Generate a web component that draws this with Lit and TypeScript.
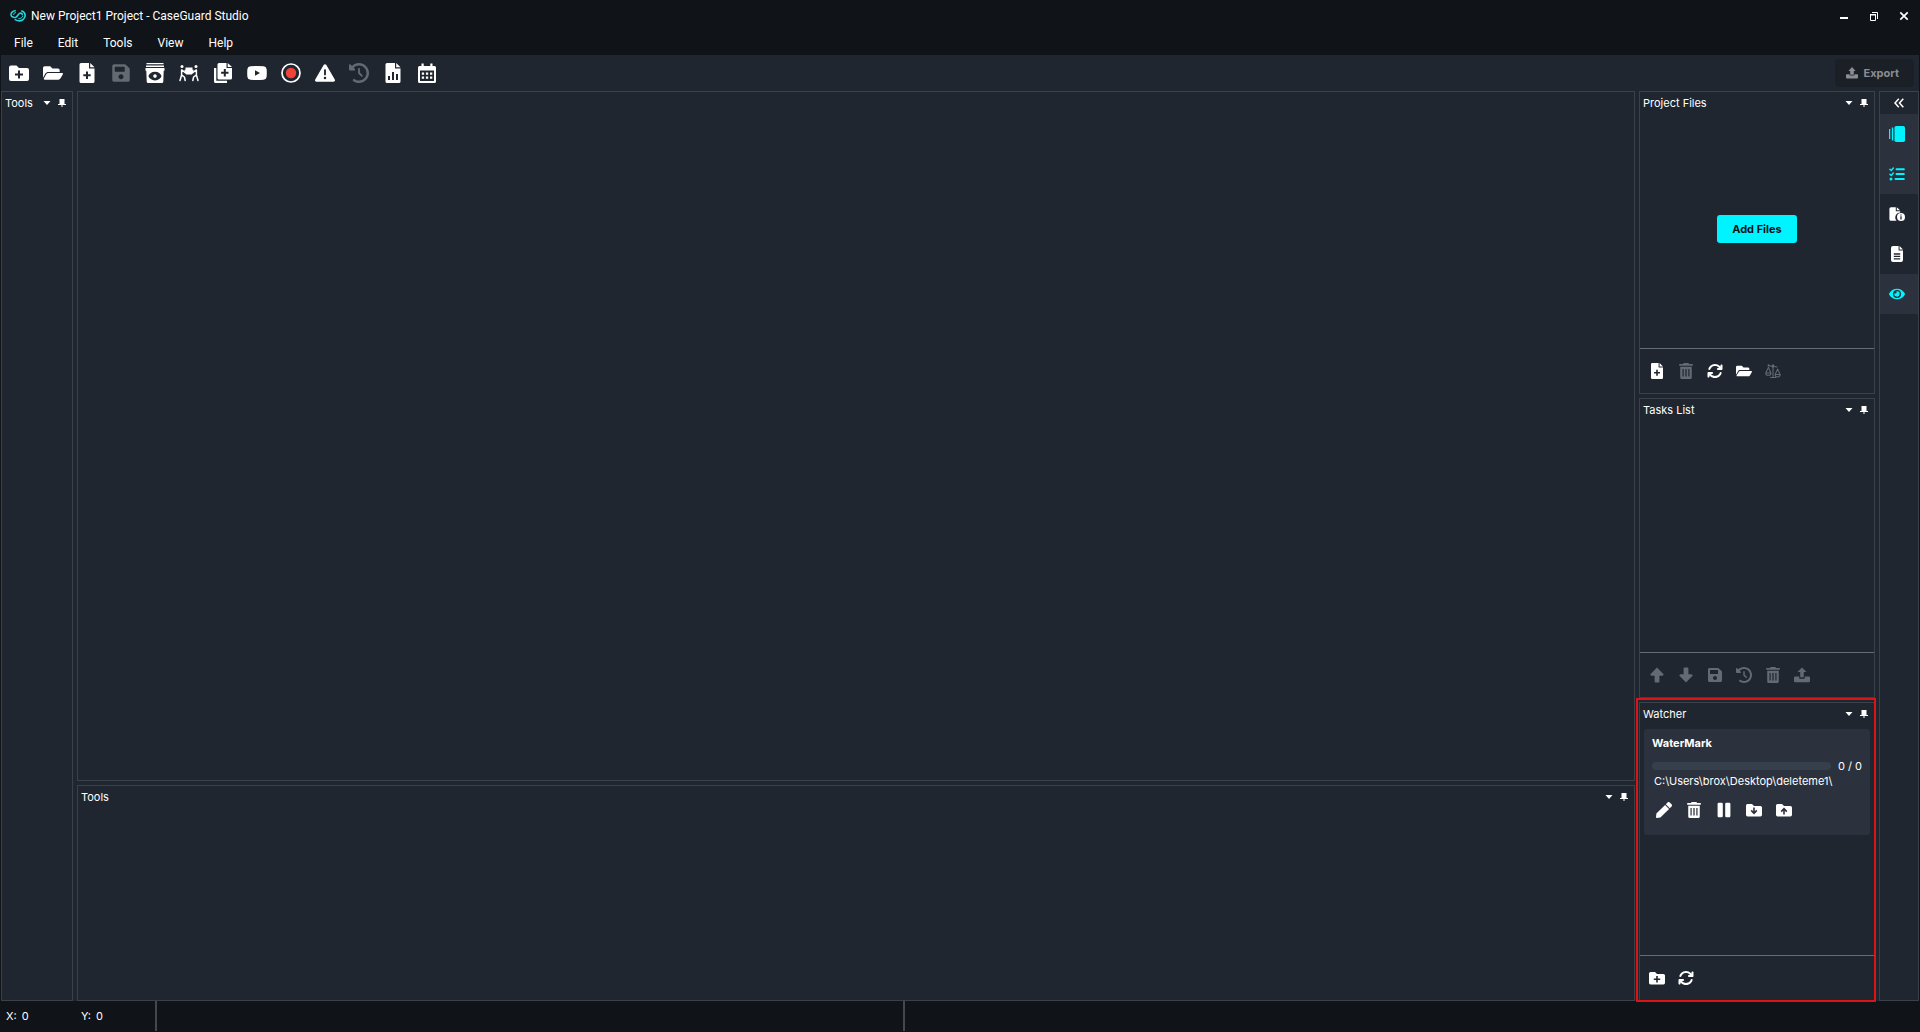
import { LitElement, html, css, svg, nothing, type TemplateResult } from "lit";
import { customElement, property } from "lit/decorators.js";
import { classMap } from "lit/directives/class-map.js";

const glyphs: Record<string, { box: string; art: TemplateResult }> = {
  logo: {
    box: "0 0 16 12",
    art: svg`<g fill="none" stroke="#1fd6dc" stroke-linecap="round">
      <path stroke-width="1.600" d="M5.200 .8C2.700 1 .8 2.700 1 4.800 1.200 7 3.800 7.900 5.800 7.200 7.600 6.500 7.800 4.600 9.200 3.600 10.600 2.700 12.200 3.300 12.300 4.800"/>
      <path stroke-width="1.600" d="M11.800 1C14 1.700 15.300 3.700 15.100 6 14.700 9.400 11.400 11.100 8.600 10.800 7.200 10.600 6.100 10.200 5.200 9.600"/>
      <path stroke-width="1" d="M5.600 2.600C4.400 2.700 3.500 3.500 3.700 4.600M12.600 6.400C12 8 10.400 8.700 8.800 8.500"/></g>`,
  },
  folderPlus: {
    box: "0 0 20 20",
    art: svg`<path fill-rule="evenodd" d="M2 2.500h5.500l2.500 2.500h8a2 2 0 0 1 2 2v9a2 2 0 0 1-2 2H2a2 2 0 0 1-2-2V4.500a2 2 0 0 1 2-2zM9 7.500V10.500H6v2h3v3h2v-3h3v-2h-3v-3z"/>`,
  },
  folderDown: {
    box: "0 0 20 20",
    art: svg`<path fill-rule="evenodd" d="M2 2.500h5.500l2.500 2.500h8a2 2 0 0 1 2 2v9a2 2 0 0 1-2 2H2a2 2 0 0 1-2-2V4.500a2 2 0 0 1 2-2zM9 7v4.500L7.200 9.800 5.800 11.200 10 15.500 14.200 11.200 12.800 9.800 11 11.500V7z"/>`,
  },
  folderUp: {
    box: "0 0 20 20",
    art: svg`<path fill-rule="evenodd" d="M2 2.500h5.500l2.500 2.500h8a2 2 0 0 1 2 2v9a2 2 0 0 1-2 2H2a2 2 0 0 1-2-2V4.500a2 2 0 0 1 2-2zM9 15.500V11L7.200 12.700 5.800 11.300 10 7 14.200 11.300 12.800 12.700 11 11v4.500z"/>`,
  },
  folderOpen: {
    box: "0 0 576 512",
    art: svg`<path d="M572.694 292.093L500.270 416.248A63.997 63.997 0 0 1 444.989 448H45.025c-18.523 0-30.064-20.093-20.731-36.093l72.424-124.155A64 64 0 0 1 152 256h399.964c18.523 0 30.064 20.093 20.730 36.093zM152 224h328v-48c0-26.510-21.490-48-48-48H272l-64-64H48C21.490 64 0 85.490 0 112v278.046l69.077-118.418C86.214 242.250 117.989 224 152 224z"/>`,
  },
  filePlus: {
    box: "0 0 20 20",
    art: svg`<path fill-rule="evenodd" d="M4 0h8v5.500h5.500V18.500a1.500 1.500 0 0 1-1.500 1.500H4a1.500 1.500 0 0 1-1.500-1.500V1.500A1.500 1.500 0 0 1 4 0zM9 8.500v2.700H6.300v2H9V16h2v-2.800h2.700v-2H11V8.500z"/><path d="M13.200 0l4.300 4.300h-4.300z"/>`,
  },
  fileReport: {
    box: "0 0 20 20",
    art: svg`<path fill-rule="evenodd" d="M4 0h8v5.500h5.500V18.500a1.500 1.500 0 0 1-1.500 1.500H4a1.500 1.500 0 0 1-1.500-1.500V1.500A1.500 1.500 0 0 1 4 0zM5 13v4h2v-4zM9 9v8h2V9zM13 11v6h2v-6z"/><path d="M13.200 0l4.300 4.300h-4.300z"/>`,
  },
  fileText: {
    box: "0 0 20 20",
    art: svg`<path fill-rule="evenodd" d="M5 0h7v5.500h5.500V17.500a2.500 2.500 0 0 1-2.500 2.500H5a2.500 2.500 0 0 1-2.500-2.500v-15A2.500 2.500 0 0 1 5 0zM6 9.200v1.600h8V9.200zM6 12.300v1.600h8v-1.600zM6 15.400V17h8v-1.600z"/><path d="M13.200 0l4.300 4.300h-4.300z"/>`,
  },
  fileInfo: {
    box: "0 0 20 20",
    art: svg`<path d="M2.500 1.500h6v5H14v1.600A6.200 6.200 0 0 0 9.500 18.500H2.500A2 2 0 0 1 .5 16.500v-13a2 2 0 0 1 2-2z"/><path d="M9.800 1.500L13.800 5.400h-4z"/><path fill-rule="evenodd" d="M15 8.800a5 5 0 1 1 0 10 5 5 0 0 1 0-10zM14.200 10.500v1.500h1.600v-1.500zM14.200 12.800v4h1.600v-4z"/>`,
  },
  save: {
    box: "0 0 448 512",
    art: svg`<path d="M433.941 129.941l-83.882-83.882A48 48 0 0 0 316.118 32H48C21.490 32 0 53.490 0 80v352c0 26.510 21.490 48 48 48h352c26.510 0 48-21.490 48-48V163.882a48 48 0 0 0-14.059-33.941zM224 416c-35.346 0-64-28.654-64-64 0-35.346 28.654-64 64-64s64 28.654 64 64c0 35.346-28.654 64-64 64zm96-304.520V212c0 6.627-5.373 12-12 12H76c-6.627 0-12-5.373-12-12V108c0-6.627 5.373-12 12-12h228.520c3.183 0 6.235 1.264 8.485 3.515l3.480 3.480A11.996 11.996 0 0 1 320 111.480z"/>`,
  },
  watch: {
    box: "0 0 20 20",
    art: svg`<path d="M1.500 0h17v1.300h-17zM1 2.600h18v1.300H1z"/><path fill-rule="evenodd" d="M.5 5h19v2.800h-.8l-.4 10.700a1.500 1.500 0 0 1-1.500 1.500H3.200a1.500 1.500 0 0 1-1.500-1.500L1.300 7.800H.5zM10 8.800c-3.400 0-5.800 2-6.600 4.300.8 2.300 3.200 4.300 6.600 4.300s5.800-2 6.600-4.300C15.800 10.800 13.400 8.800 10 8.800z"/><circle cx="10" cy="13.100" r="1.800"/>`,
  },
  meeting: {
    box: "0 0 20 20",
    art: svg`<circle cx="3" cy="3.600" r="1.500"/><circle cx="17" cy="3.600" r="1.500"/><g fill="none" stroke="currentColor" stroke-width="1.500" stroke-linecap="round" stroke-linejoin="round"><path d="M2.600 7v5L1 17.500M2.800 12.200l2.600 1.800.8 3.500M3 7l3.500 2.800M17.400 7v5l1.600 5.500M17.200 12.200L14.600 14l-.8 3.500M17 7l-3.500 2.800"/></g><path d="M6.500 4.500h7v2.300h1V8L13 11.500H7L5.500 8V6.800h1z"/>`,
  },
  copies: {
    box: "0 0 20 20",
    art: svg`<path d="M1 5h2.300v12.700H14V20H2.500A1.500 1.500 0 0 1 1 18.500z"/><path fill-rule="evenodd" d="M6 0h7.500v5H19V15a1.500 1.500 0 0 1-1.500 1.500H6A1.500 1.500 0 0 1 4.500 15V1.500A1.500 1.500 0 0 1 6 0zM10.800 6v2.700H8.100v2h2.700v2.800h2v-2.800h2.700v-2h-2.700V6z"/><path d="M14.700 0L19 3.900h-4.300z"/>`,
  },
  video: {
    box: "0 0 20 20",
    art: svg`<path fill-rule="evenodd" d="M3.500 3.200Q10 2.600 16.500 3.200 19.200 3.400 19.600 6 20 10 19.600 14 19.200 16.600 16.500 16.800 10 17.400 3.500 16.800 .8 16.600 .4 14 0 10 .4 6 .8 3.400 3.500 3.200zM8 7.200v5.600l5-2.800z"/>`,
  },
  record: {
    box: "0 0 20 20",
    art: svg`<circle cx="10" cy="10" r="9" fill="none" stroke="currentColor" stroke-width="1.700"/><circle cx="10" cy="10" r="5.200" fill="#f04438"/>`,
  },
  warning: {
    box: "0 0 512 512",
    art: svg`<path d="M256 32c14.200 0 27.300 7.500 34.500 19.800l216 368c7.300 12.400 7.300 27.700 .2 40.100S486.300 480 472 480H40c-14.300 0-27.600-7.700-34.700-20.100s-7-27.800 .2-40.100l216-368C228.700 39.500 241.800 32 256 32zm0 128c-13.300 0-24 10.700-24 24V296c0 13.300 10.700 24 24 24s24-10.700 24-24V184c0-13.300-10.700-24-24-24zm32 224a32 32 0 1 0 -64 0 32 32 0 1 0 64 0z"/>`,
  },
  history: {
    box: "0 0 512 512",
    art: svg`<path d="M75 75L41 41C25.900 25.900 0 36.600 0 57.900V168c0 13.300 10.700 24 24 24H134.100c21.400 0 32.100-25.900 17-41l-30.800-30.800C155 85.500 203 64 256 64c106 0 192 86 192 192s-86 192-192 192c-40.800 0-78.600-12.700-109.700-34.400c-14.500-10.100-34.400-6.600-44.600 7.900s-6.600 34.400 7.900 44.600C151.200 495 201.700 512 256 512c141.400 0 256-114.600 256-256S397.400 0 256 0C185.300 0 121.300 28.700 75 75zm181 53c-13.300 0-24 10.700-24 24V256c0 6.400 2.500 12.500 7 17l72 72c9.400 9.400 24.600 9.400 33.900 0s9.400-24.600 0-33.900l-65-65V152c0-13.300-10.700-24-24-24z"/>`,
  },
  calendar: {
    box: "0 0 20 20",
    art: svg`<path fill-rule="evenodd" d="M4.500 .5h2.200V3h6.600V.5h2.200V3H17.500A1.500 1.500 0 0 1 19 4.500v14a1.500 1.500 0 0 1-1.500 1.500h-15A1.500 1.500 0 0 1 1 18.500v-14A1.500 1.500 0 0 1 2.500 3h2zM3 7.500V18h14V7.500z"/><path d="M4.800 9.500h2.300v2.200H4.800zM8.900 9.500h2.300v2.200H8.900zM13 9.500h2.300v2.200H13zM4.800 13.500h2.300v2.200H4.800zM8.900 13.500h2.300v2.200H8.900zM13 13.500h2.300v2.200H13z"/>`,
  },
  upload: {
    box: "0 0 20 20",
    art: svg`<path d="M10 .5l5.600 5.800h-3.400v6.400H7.800V6.300H4.400z"/><path d="M1.500 12h5v1.800a1 1 0 0 0 1 1h5a1 1 0 0 0 1-1V12h5A1.500 1.500 0 0 1 20 13.500V17.500a1.500 1.500 0 0 1-1.500 1.500h-17A1.500 1.500 0 0 1 0 17.500V13.500A1.500 1.500 0 0 1 1.500 12z"/>`,
  },
  exportUp: {
    box: "0 0 20 20",
    art: svg`<path d="M10 0l6 6.500h-3V12a1 1 0 0 1-1 1H8a1 1 0 0 1-1-1V6.500H4z"/><path d="M1.500 12h4.200a2.300 2.300 0 0 0 2.300 2.300h4a2.300 2.300 0 0 0 2.300-2.300h4.200A1.500 1.500 0 0 1 20 13.500v4a1.500 1.500 0 0 1-1.500 1.500h-17A1.500 1.500 0 0 1 0 17.500v-4A1.500 1.500 0 0 1 1.500 12z"/>`,
  },
  trash: {
    box: "0 0 20 20",
    art: svg`<path d="M7 0h6l.8 1.300H18.500v2h-17v-2H6.200z"/><path fill-rule="evenodd" d="M2.800 4.600h14.400V18a2 2 0 0 1-2 2H4.800a2 2 0 0 1-2-2zM5.600 7.500V17h1.500V7.500zM9.200 7.500V17h1.600V7.500zM12.900 7.500V17h1.500V7.500z"/>`,
  },
  sync: {
    box: "0 0 512 512",
    art: svg`<path d="M105.100 202.600c7.700-21.800 20.200-42.300 37.800-59.800c62.500-62.500 163.800-62.500 226.300 0L386.300 160H352c-17.700 0-32 14.300-32 32s14.300 32 32 32H463.900c17.700 0 32-14.300 32-32V80c0-17.700-14.300-32-32-32s-32 14.300-32 32v35.200L414.400 97.600c-87.500-87.500-229.300-87.500-316.800 0C73.200 122 55.600 150.700 44.800 181.400c-5.900 16.700 2.900 34.900 19.500 40.800s34.900-2.900 40.800-19.500zM39 289.300c-5 1.500-9.800 4.200-13.700 8.200c-4 4-6.700 8.800-8.100 14c-.3 1.200-.6 2.500-.8 3.800c-.3 1.700-.4 3.400-.4 5.100V432c0 17.700 14.300 32 32 32s32-14.300 32-32V396.900l17.600 17.500c87.500 87.400 229.300 87.400 316.700 0c24.400-24.400 42.100-53.100 52.900-83.700c5.900-16.700-2.900-34.900-19.500-40.800s-34.900 2.900-40.800 19.500c-7.700 21.800-20.200 42.300-37.800 59.800c-62.500 62.500-163.800 62.500-226.300 0l-.1-.1L125.600 352H160c17.700 0 32-14.300 32-32s-14.300-32-32-32H48.400c-1.600 0-3.200 .1-4.800 .3s-3.100 .5-4.600 1z"/>`,
  },
  scales: {
    box: "0 0 20 20",
    art: svg`<g fill="none" stroke="currentColor" stroke-width="1.300" stroke-linejoin="round"><path d="M4.500 3.500L15.500 5M10 1.500V18M6.500 18H14M4.200 5.500L1 12.500h6.400zM15.800 7.500l-3.200 7H19z"/><path d="M1 12.800a3.200 2.600 0 0 0 6.400 0M12.600 14.800a3.200 2.600 0 0 0 6.400 0"/></g><circle cx="4.500" cy="3" r="1.300"/><circle cx="10" cy="4" r="1.800"/>`,
  },
  arrowUp: { box: "0 0 20 20", art: svg`<path d="M10 .5L18.500 9.500 17 11h-4V18.500a1 1 0 0 1-1 1H8a1 1 0 0 1-1-1V11H3L1.500 9.500z"/>` },
  arrowDown: { box: "0 0 20 20", art: svg`<path d="M10 19.500L18.500 10.500 17 9h-4V1.500a1 1 0 0 0-1-1H8a1 1 0 0 0-1 1V9H3L1.500 10.500z"/>` },
  pen: {
    box: "0 0 512 512",
    art: svg`<path d="M290.740 93.240l128.020 128.020-277.990 277.990-114.140 12.600C11.350 513.540-1.560 500.620.140 485.340l12.700-114.220 277.900-277.880zm207.200-19.060l-60.110-60.110c-18.750-18.750-49.160-18.750-67.910 0l-56.550 56.550 128.020 128.020 56.550-56.550c18.750-18.760 18.750-49.160 0-67.910z"/>`,
  },
  pause: { box: "0 0 20 20", art: svg`<rect x="2" y="1" width="6.500" height="18" rx="1.500"/><rect x="11.500" y="1" width="6.500" height="18" rx="1.500"/>` },
  slides: { box: "0 0 16 16", art: svg`<rect x="5.500" y="0" width="10.500" height="16" rx="1.800"/><rect x="2.800" y="1.500" width="1.400" height="13"/><rect x="0" y="3" width="1.300" height="10"/>` },
  checklist: {
    box: "0 0 16 16",
    art: svg`<g fill="none" stroke="currentColor" stroke-linecap="round" stroke-linejoin="round"><path stroke-width="1.400" d="M.9 3.300l1.300 1.200L4.300 2M.9 8.300l1.300 1.200L4.300 7"/><path stroke-width="1.900" d="M7.500 3.200h7.400M7.500 8h7.400M6.500 13h8.400"/></g><circle cx="2" cy="13" r="1.500"/>`,
  },
  eye: {
    box: "0 0 576 512",
    art: svg`<path d="M572.520 241.400C518.290 135.590 410.930 64 288 64S57.680 135.640 3.480 241.410a32.350 32.350 0 0 0 0 29.190C57.710 376.410 165.070 448 288 448s230.320-71.640 284.520-177.410a32.350 32.350 0 0 0 0-29.190zM288 400a144 144 0 1 1 144-144 143.930 143.930 0 0 1-144 144zm0-240a95.310 95.310 0 0 0-25.310 3.790 47.850 47.850 0 0 1-66.900 66.900A95.780 95.780 0 1 0 288 160z"/>`,
  },
  collapse: { box: "0 0 10 10", art: svg`<path fill="none" stroke="currentColor" stroke-width="1.500" d="M4.800 .8L1 5l3.800 4.200M9.300 .8L5.500 5l3.800 4.200"/>` },
  caret: { box: "0 0 8 8", art: svg`<path d="M.5 2h7L4 6z"/>` },
  pin: { box: "0 0 8 10", art: svg`<path d="M1.500 1h5v5H8v1H0V6h1.500zM3.500 7h1v2h-1z"/>` },
  minimize: { box: "0 0 10 10", art: svg`<path d="M1 6h8v2H1z"/>` },
  restore: { box: "0 0 10 10", art: svg`<path fill="none" stroke="currentColor" d="M1.500 3.500h5v6h-5zM3 1.500h5.500V8"/><path d="M1 3h6v1.500H1z"/>` },
  close: { box: "0 0 10 10", art: svg`<path fill="none" stroke="currentColor" stroke-width="1.700" d="M1.300 1.300l7.400 7.400M8.700 1.300L1.300 8.700"/>` },
};

@customElement("cg-icon")
class CgIcon extends LitElement {
  static styles = css`
    :host { display: inline-flex; width: var(--icon, 16px); height: var(--icon, 16px); }
    .glyph { width: 100%; height: 100%; fill: currentColor; display: block; }
  `;
  @property() name = "";
  render() {
    const g = glyphs[this.name];
    return g
      ? html`<svg class="glyph" viewBox=${g.box} aria-hidden="true">${g.art}</svg>`
      : nothing;
  }
}

interface Action {
  icon: string;
  label: string;
  off?: boolean;
}

const bare = css`
  * { box-sizing: border-box; }
  button {
    font: inherit;
    color: inherit;
    background: none;
    border: 0;
    margin: 0;
    padding: 0;
    display: flex;
    align-items: center;
    justify-content: center;
  }
  button:disabled { color: var(--muted); }
`;

@customElement("cg-actions")
class CgActions extends LitElement {
  static styles = [
    bare,
    css`
      :host { display: flex; align-items: center; }
      .action { width: var(--pitch, 29px); height: 28px; }
    `,
  ];
  @property({ attribute: false }) items: Action[] = [];
  render() {
    return this.items.map(
      (a) => html`<button class="action" aria-label=${a.label} ?disabled=${!!a.off}>
        <cg-icon name=${a.icon}></cg-icon>
      </button>`,
    );
  }
}

@customElement("cg-panel")
class CgPanel extends LitElement {
  static styles = [
    bare,
    css`
      :host {
        display: flex;
        flex-direction: column;
        position: relative;
        min-width: 0;
        min-height: 0;
        border: 1px solid var(--line);
      }
      .head { display: flex; align-items: center; height: 22px; padding: 0 3px; }
      .title { flex: 1; margin: 0; font: inherit; }
      .tool { width: 15px; height: 16px; --icon: 8px; }
      .tool.pin { --icon: 10px; }
      .body { flex: 1; min-height: 0; display: flex; flex-direction: column; }
      .foot { height: 45px; display: flex; align-items: center; padding: 0 2px; border-top: 1px solid #676c73; }
    `,
  ];
  @property() heading = "";
  @property({ attribute: false }) actions: Action[] = [];
  render() {
    return html`
      ${this.heading
        ? html`<header class="head">
            <h2 class="title">${this.heading}</h2>
            <button class="tool" aria-label="Panel menu"><cg-icon name="caret"></cg-icon></button>
            <button class="tool pin" aria-label="Pin panel"><cg-icon name="pin"></cg-icon></button>
          </header>`
        : nothing}
      <div class="body"><slot></slot></div>
      ${this.actions.length
        ? html`<footer class="foot"><cg-actions .items=${this.actions}></cg-actions></footer>`
        : nothing}
    `;
  }
}

@customElement("app-root")
class AppRoot extends LitElement {
  static styles = [
    bare,
    css`
      :host {
        --base: #20262f;
        --dark: #101317;
        --line: #3b4149;
        --muted: #646a72;
        --raised: #2b323d;
        --accent: #00f4ff;
        display: block;
        background: var(--dark);
        color: #fff;
        font: 11px/16px Inter, "Liberation Sans", sans-serif;
      }
      .window { display: flex; flex-direction: column; min-height: 100vh; padding: 0 1px; }
      .titlebar, .menu { font: 12px/16px Roboto, "Open Sans", sans-serif; }
      .titlebar { display: flex; align-items: center; height: 31px; padding-left: 9px; gap: 5px; }
      .logo { --icon: 16px; }
      .name { flex: 1; margin: 0; font: inherit; }
      .controls { display: flex; }
      .control { width: 30px; height: 24px; --icon: 10px; }
      .menu { display: flex; height: 24px; padding-left: 1px; }
      .entry { padding: 0 13px 0 12px; height: 24px; }
      .main { flex: 1; display: flex; flex-direction: column; background: var(--base); }
      .toolbar { display: flex; justify-content: space-between; align-items: center; height: 36px; padding: 0 5px 0 1px; --icon: 20px; --pitch: 34px; }
      .export { height: 28px; gap: 6px; padding: 0 15px 0 11px; border-radius: 4px; background: #1b2027; font-weight: 700; --icon: 12px; }
      .export:disabled { color: #8a8d91; }
      .workspace { flex: 1; display: grid; grid-template-columns: 72px minmax(0, 1fr) 236px 40px; gap: 4px; }
      .center { display: grid; grid-template-rows: 1fr 216px; gap: 4px; }
      .right { display: grid; grid-template-rows: 303fr 300fr 299fr; gap: 4px; }
      .empty { flex: 1; display: flex; align-items: center; justify-content: center; padding-bottom: 5px; }
      .add { width: 80px; height: 28px; padding-top: 1px; border-radius: 3px; background: var(--accent); color: #0b1218; font-weight: 700; }
      .frame { position: absolute; inset: -5px -2px -2px -4px; border: 2px solid #dc1418; pointer-events: none; z-index: 1; }
      .card { display: flex; flex-direction: column; margin: 4px; padding: 6px 8px 11px; border-radius: 3px; background: var(--raised); }
      .job { margin: 0; font: inherit; font-weight: 700; }
      .status { display: flex; align-items: center; gap: 7px; margin-top: 7px; }
      .bar { flex: 1; min-width: 0; height: 8px; appearance: none; border: 0; border-radius: 4px; overflow: hidden; background: #35404c; }
      .bar::-webkit-progress-bar { background: #35404c; }
      .bar::-webkit-progress-value { background: var(--accent); }
      .path { margin: 0; padding-left: 2px; line-height: 14px; }
      .jobtools { margin: 8px 0 0 -3px; --pitch: 30px; }
      .rail { display: flex; flex-direction: column; border: 1px solid var(--line); }
      .collapse { height: 22px; --icon: 10px; }
      .tab { height: 40px; padding-right: 4px; }
      .tab.on { background: var(--raised); color: var(--accent); }
      .statusbar { display: grid; grid-template-columns: 156px 748fr 1014fr; height: 31px; padding-bottom: 1px; }
      .cell { display: flex; align-items: center; border-right: 2px solid #44474b; }
      .cell:last-child { border-right: 0; }
      .coord { display: flex; gap: 5px; width: 75px; padding-left: 5px; }
    `,
  ];

  private menu = ["File", "Edit", "Tools", "View", "Help"];

  private toolbar: Action[] = [
    { icon: "folderPlus", label: "New project" },
    { icon: "folderOpen", label: "Open project" },
    { icon: "filePlus", label: "Add file" },
    { icon: "save", label: "Save", off: true },
    { icon: "watch", label: "Watch folder" },
    { icon: "meeting", label: "Interview" },
    { icon: "copies", label: "Batch add" },
    { icon: "video", label: "Video" },
    { icon: "record", label: "Record" },
    { icon: "warning", label: "Warnings" },
    { icon: "history", label: "History", off: true },
    { icon: "fileReport", label: "Report" },
    { icon: "calendar", label: "Schedule" },
  ];

  private fileActions: Action[] = [
    { icon: "filePlus", label: "Add file" },
    { icon: "trash", label: "Delete", off: true },
    { icon: "sync", label: "Refresh" },
    { icon: "folderOpen", label: "Open folder" },
    { icon: "scales", label: "Compare", off: true },
  ];

  private taskActions: Action[] = [
    { icon: "arrowUp", label: "Move up", off: true },
    { icon: "arrowDown", label: "Move down", off: true },
    { icon: "save", label: "Save", off: true },
    { icon: "history", label: "History", off: true },
    { icon: "trash", label: "Delete", off: true },
    { icon: "upload", label: "Export", off: true },
  ];

  private watcherActions: Action[] = [
    { icon: "folderPlus", label: "Add watcher" },
    { icon: "sync", label: "Refresh" },
  ];

  private jobActions: Action[] = [
    { icon: "pen", label: "Edit" },
    { icon: "trash", label: "Delete" },
    { icon: "pause", label: "Pause" },
    { icon: "folderDown", label: "Input folder" },
    { icon: "folderUp", label: "Output folder" },
  ];

  private tabs = [
    { icon: "slides", label: "Project files", on: true },
    { icon: "checklist", label: "Tasks list", on: true },
    { icon: "fileInfo", label: "File info", on: false },
    { icon: "fileText", label: "Transcript", on: false },
    { icon: "eye", label: "Watcher", on: true },
  ];

  render() {
    return html`
      <div class="window">
        <header class="titlebar">
          <cg-icon class="logo" name="logo"></cg-icon>
          <h1 class="name">New Project1 Project - CaseGuard Studio</h1>
          <div class="controls">
            <button class="control" aria-label="Minimize"><cg-icon name="minimize"></cg-icon></button>
            <button class="control" aria-label="Restore"><cg-icon name="restore"></cg-icon></button>
            <button class="control" aria-label="Close"><cg-icon name="close"></cg-icon></button>
          </div>
        </header>
        <nav class="menu">${this.menu.map((m) => html`<button class="entry">${m}</button>`)}</nav>
        <div class="main">
          <div class="toolbar">
            <cg-actions .items=${this.toolbar}></cg-actions>
            <button class="export" disabled><cg-icon name="exportUp"></cg-icon>Export</button>
          </div>
          <main class="workspace">
            <cg-panel heading="Tools"></cg-panel>
            <div class="center">
              <cg-panel></cg-panel>
              <cg-panel heading="Tools"></cg-panel>
            </div>
            <div class="right">
              <cg-panel heading="Project Files" .actions=${this.fileActions}>
                <div class="empty"><button class="add">Add Files</button></div>
              </cg-panel>
              <cg-panel heading="Tasks List" .actions=${this.taskActions}></cg-panel>
              <cg-panel heading="Watcher" .actions=${this.watcherActions}>
                <article class="card">
                  <h3 class="job">WaterMark</h3>
                  <div class="status">
                    <progress class="bar" value="0" max="1" aria-label="WaterMark progress"></progress>
                    <span>0 / 0</span>
                  </div>
                  <p class="path">C:\\Users\\brox\\Desktop\\deleteme1\\</p>
                  <cg-actions class="jobtools" .items=${this.jobActions}></cg-actions>
                </article>
                <div class="frame"></div>
              </cg-panel>
            </div>
            <aside class="rail">
              <button class="collapse" aria-label="Expand side bar"><cg-icon name="collapse"></cg-icon></button>
              ${this.tabs.map(
                (t) => html`<button class=${classMap({ tab: true, on: t.on })} aria-label=${t.label}>
                  <cg-icon name=${t.icon}></cg-icon>
                </button>`,
              )}
            </aside>
          </main>
        </div>
        <footer class="statusbar">
          <div class="cell">
            <span class="coord"><span>X:</span><span>0</span></span>
            <span class="coord"><span>Y:</span><span>0</span></span>
          </div>
          <div class="cell"></div>
          <div class="cell"></div>
        </footer>
      </div>
    `;
  }
}
